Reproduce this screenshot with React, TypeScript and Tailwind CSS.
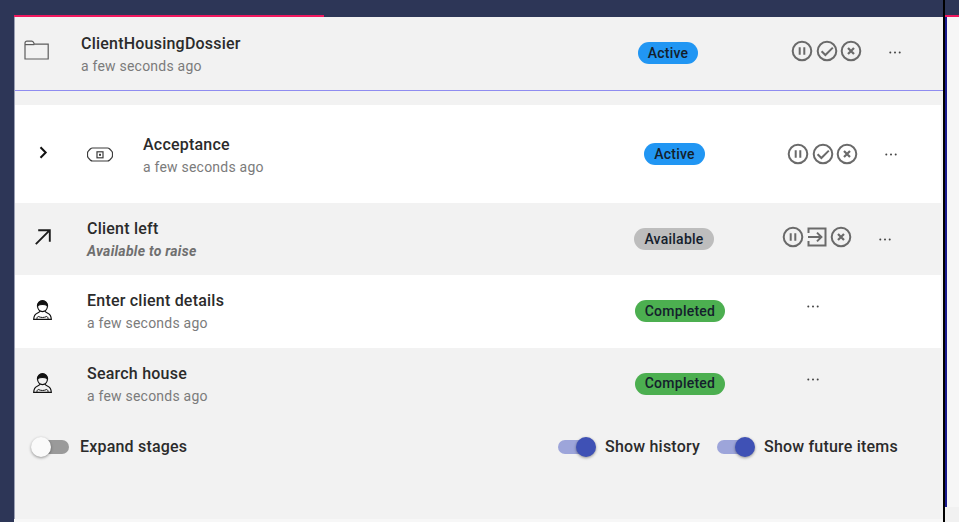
import React from "react";

const font = { fontFamily: 'Roboto, "Liberation Sans", sans-serif' };

function Pause() {
  return (
    <svg width="22" height="22" viewBox="0 0 22 22" fill="none" stroke="#6a6a6a" strokeWidth="2">
      <circle cx="11" cy="11" r="9.3" />
      <path d="M8.7 7.2v7.6M13.3 7.2v7.6" />
    </svg>
  );
}
function Check() {
  return (
    <svg width="22" height="22" viewBox="0 0 22 22" fill="none" stroke="#6a6a6a" strokeWidth="2">
      <circle cx="11" cy="11" r="9.3" />
      <path d="M5.6 11.2l3.8 3.8 7.4-7.4" />
    </svg>
  );
}
function Cancel() {
  return (
    <svg width="22" height="22" viewBox="0 0 22 22" fill="none" stroke="#6a6a6a" strokeWidth="2">
      <circle cx="11" cy="11" r="9.3" />
      <path d="M8 8l6 6M14 8l-6 6" strokeWidth="2.2" />
    </svg>
  );
}
function Enter() {
  return (
    <svg width="20" height="20" viewBox="0 0 20 20" fill="none" stroke="#6a6a6a" strokeWidth="2">
      <path d="M1.5 6V1.5h17v17h-17V14" />
      <path d="M1 10h13M10 5.6l4.4 4.4-4.4 4.4" />
    </svg>
  );
}
function Dots() {
  return (
    <svg width="12" height="3" viewBox="0 0 12 3" fill="#444">
      <circle cx="1.3" cy="1.5" r="1" />
      <circle cx="6" cy="1.5" r="1" />
      <circle cx="10.7" cy="1.5" r="1" />
    </svg>
  );
}
function Folder() {
  return (
    <svg width="25" height="20" viewBox="0 0 25 20" fill="none" stroke="#5c5c5c" strokeWidth="1.2">
      <path d="M1 19V3.2C1 2 1.8 1.2 3 1.2h4.6c1 0 1.6.5 2 1.4l.7 1.6h13.9V19z" />
      <path d="M1 4.6h9.3" />
    </svg>
  );
}
function Stage() {
  return (
    <svg width="26" height="17" viewBox="0 0 26 17" fill="none" stroke="#3c3c3c" strokeWidth="1.2">
      <path d="M5.5 2h15c1 0 1.6.4 2.2 1l2 2.2c.6.6.8 1.2.8 2v2.6c0 .8-.2 1.4-.8 2l-2 2.2c-.6.6-1.2 1-2.2 1h-15c-1 0-1.6-.4-2.2-1l-2-2.2c-.6-.6-.8-1.2-.8-2V7.2c0-.8.2-1.4.8-2l2-2.2c.6-.6 1.2-1 2.2-1z" />
      <rect x="10" y="5.8" width="6" height="6" />
      <rect x="12" y="7.8" width="2" height="2" fill="#3c3c3c" stroke="none" />
    </svg>
  );
}
function Arrow() {
  return (
    <svg width="16" height="16" viewBox="0 0 16 16" fill="none" stroke="#1c1c1c" strokeWidth="1.9">
      <path d="M.8 15.2L14.8 1.2M3.2 1.2h11.6v11.6" />
    </svg>
  );
}
function Person() {
  return (
    <svg width="19" height="20" viewBox="0 0 19 20" fill="none" stroke="#111" strokeWidth="1.2">
      <path d="M4.5 5.600a5 5 0 0 1 10 0c-1.500-.8-3.200-1.100-5-1.100s-3.500.3-5 1.100z" fill="#111" />
      <path d="M4.500 5.600c0 3.400 2.100 6 5 6s5-2.600 5-6" />
      <path d="M7 11.200c-.3 1-1.300 1.500-2.800 2.100C2 14.200.9 15.800.7 19.300h17.600c-.2-3.500-1.300-5.100-3.500-6-1.500-.6-2.500-1.100-2.800-2.100" />
      <path d="M4 19.300c-.2-1.500.2-2.400 1.300-2.800 2.800 1.300 5.600 1.300 8.400 0 1.100.4 1.500 1.300 1.300 2.800" strokeWidth="1" />
    </svg>
  );
}
function Chevron() {
  return (
    <svg width="9" height="13" viewBox="0 0 9 13" fill="none" stroke="#111" strokeWidth="2">
      <path d="M1.500 1.200l5.200 5.300-5.200 5.300" />
    </svg>
  );
}

function Text({ title, sub, italic, cls }: { title: string; sub: string; italic?: boolean; cls: string }) {
  return (
    <div className={"flex flex-col gap-[4px] " + cls}>
      <div className="text-[16px] leading-[19px] font-medium tracking-[0.22px] text-[#2b2b2b]">{title}</div>
      <div
        className={
          italic
            ? "text-[14px] leading-[19px] font-bold italic tracking-[0.27px] text-[#6f6f6f]"
            : "text-[14px] leading-[19px] tracking-[0.22px] text-[#7b7b7b]"
        }
      >
        {sub}
      </div>
    </div>
  );
}

function Badge({ label, cls }: { label: string; cls: string }) {
  return (
    <div
      className={
        "flex h-[22px] items-center justify-center rounded-full text-[14px] font-medium tracking-[0.25px] text-[#14202c] " +
        cls
      }
    >
      {label}
    </div>
  );
}

function ToggleOn() {
  return (
    <div className="flex w-[38px] items-center">
      <div className="-mr-[12px] h-[14px] w-[30px] shrink-0 rounded-full bg-[#9da5da]" />
      <div className="z-10 h-[20px] w-[20px] shrink-0 rounded-full bg-[#3f51b5] shadow-[0_1px_3px_rgba(0,0,0,0.4)]" />
    </div>
  );
}

function ToggleOff() {
  return (
    <div className="flex w-[38px] items-center">
      <div className="z-10 h-[20px] w-[20px] shrink-0 rounded-full bg-[#fafafa] shadow-[0_1px_3px_rgba(0,0,0,0.4)]" />
      <div className="-ml-[12px] h-[14px] w-[30px] shrink-0 rounded-full bg-[#9a9a9a]" />
    </div>
  );
}

export default function App() {
  return (
    <div className="flex h-[522px] w-[959px] overflow-hidden bg-[#2d3657]" style={font}>
      <div className="w-[14px] shrink-0" />

      <div className="flex w-[929px] shrink-0 flex-col">
        <div className="h-[15px] shrink-0" />
        <div className="h-[2px] w-[310px] shrink-0 bg-[#f0185f]" />

        <div className="flex h-[502px] shrink-0 flex-col border-l border-[#9ba0b4] bg-[#f2f2f2]">
          {/* Case header */}
          <div className="flex h-[73px] shrink-0 items-center">
            <div className="flex w-[66px] shrink-0 pl-[9px] -mt-[8px]"><Folder /></div>
            <div className="w-[557px] shrink-0"><Text cls="pt-[2px]" title="ClientHousingDossier" sub="a few seconds ago" /></div>
            <div className="w-[153px] shrink-0 -mt-[1px]"><Badge label="Active" cls="w-[60px] bg-[#2196f3]" /></div>
            <div className="flex w-[98px] shrink-0 gap-[2.5px] -mt-[5px]"><Pause /><Check /><Cancel /></div>
            <div className="shrink-0 -mt-[3px]"><Dots /></div>
          </div>
          <div className="h-[1px] shrink-0 bg-[#8f8cf0]" />
          <div className="h-[14px] shrink-0" />

          {/* Acceptance */}
          <div className="mr-[2px] flex h-[98px] shrink-0 items-center bg-white">
            <div className="flex w-[72px] shrink-0 pl-[24px] -mt-[4px]"><Chevron /></div>
            <div className="flex w-[56px] shrink-0"><Stage /></div>
            <div className="w-[501px] shrink-0"><Text cls="pt-[4px]" title="Acceptance" sub="a few seconds ago" /></div>
            <div className="w-[143px] shrink-0"><Badge label="Active" cls="w-[61px] bg-[#2196f3]" /></div>
            <div className="flex w-[98px] shrink-0 gap-[2.5px]"><Pause /><Check /><Cancel /></div>
            <div className="shrink-0"><Dots /></div>
          </div>

          {/* Client left */}
          <div className="mr-[2px] flex h-[72px] shrink-0 items-center">
            <div className="flex w-[72px] shrink-0 pl-[20px] -mt-[4px]"><Arrow /></div>
            <div className="w-[547px] shrink-0"><Text cls="pt-[2px]" title="Client left" sub="Available to raise" italic /></div>
            <div className="w-[148px] shrink-0"><Badge label="Available" cls="w-[80px] bg-[#bdbdbd]" /></div>
            <div className="flex w-[97px] shrink-0 items-center gap-[3px] -mt-[4px]"><Pause /><Enter /><Cancel /></div>
            <div className="shrink-0"><Dots /></div>
          </div>

          {/* Enter client details */}
          <div className="mr-[2px] flex h-[73px] shrink-0 items-center bg-white">
            <div className="flex w-[72px] shrink-0 pl-[18px] -mt-[3px]"><Person /></div>
            <div className="w-[548px] shrink-0"><Text cls="pt-[1px]" title="Enter client details" sub="a few seconds ago" /></div>
            <div className="w-[172px] shrink-0 -mt-[1px]"><Badge label="Completed" cls="w-[90px] bg-[#4caf50]" /></div>
            <div className="shrink-0 mb-[11px]"><Dots /></div>
          </div>

          {/* Search house */}
          <div className="mr-[2px] flex h-[72px] shrink-0 items-center">
            <div className="flex w-[72px] shrink-0 pl-[18px] -mt-[3px]"><Person /></div>
            <div className="w-[548px] shrink-0"><Text cls="pt-[2px]" title="Search house" sub="a few seconds ago" /></div>
            <div className="w-[172px] shrink-0 -mt-[1px]"><Badge label="Completed" cls="w-[90px] bg-[#4caf50]" /></div>
            <div className="shrink-0 mb-[10px]"><Dots /></div>
          </div>

          {/* Toggles */}
          <div className="flex items-center pl-[16px] pt-[17px] text-[16px] font-medium leading-[20px] tracking-[0.2px] text-[#2b2b2b]">
            <ToggleOff />
            <span className="ml-[11px] w-[478px] shrink-0">Expand stages</span>
            <ToggleOn />
            <span className="ml-[9px] w-[112px] shrink-0">Show history</span>
            <ToggleOn />
            <span className="ml-[9px] shrink-0">Show future items</span>
          </div>
        </div>
        <div className="grow bg-[#f7f7f7]" />
      </div>

      <div className="w-[2px] shrink-0 bg-black" />
      <div className="flex grow flex-col">
        <div className="h-[15px] shrink-0" />
        <div className="h-[2px] shrink-0 bg-[#f0185f]" />
        <div className="grow border-l-2 border-[#1b1b8f] bg-[#f6f6f6]" />
        <div className="h-[15px] shrink-0 bg-[#f1f1f1]" />
      </div>
    </div>
  );
}
